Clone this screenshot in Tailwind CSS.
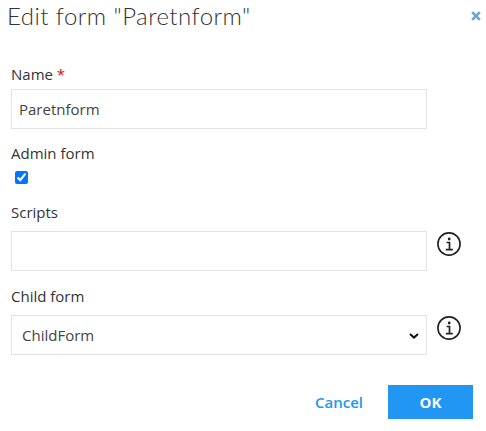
<!DOCTYPE html>
<html lang="en">
<head>
  <meta charset="UTF-8">
  <title>Edit form</title>
  <script src="https://cdn.jsdelivr.net/npm/@tailwindcss/browser@4"></script>
</head>
<body class="bg-white h-[431px] w-[486px] overflow-hidden font-['Open_Sans',sans-serif] text-[#333]">
  <header class="flex justify-between items-start h-[62px] pl-[7px] pr-[5px]">
    <h1 class="font-['Lato',sans-serif] font-light text-[24px] leading-[32px] text-[#333] tracking-[0.45px]">Edit form "Paretnform"</h1>
    <button class="mt-[11px] text-[#6aa5d8]">
      <svg width="10" height="10" viewBox="0 0 10 10"><path d="M1.2 1.2L8.8 8.8M8.8 1.2L1.2 8.8" stroke="currentColor" stroke-width="2.6" fill="none"/></svg>
    </button>
  </header>

  <form class="pl-[11px] pr-[25px]">
    <label class="block text-[15px] leading-[27px] h-[27px] -mt-[1px]">Name <span class="text-red-600">*</span></label>
    <input type="text" value="Paretnform" class="block w-[416px] h-[40px] mt-[1px] border border-[#e3e3e3] px-[7px] text-[15px] text-[#444]">

    <label class="block text-[15px] leading-[20px] mt-[14px]">Admin form</label>
    <input type="checkbox" checked class="block w-[13px] h-[13px] ml-[4px] mt-[8px] accent-[#0075ff]">

    <label class="block text-[15px] leading-[20px] mt-[18px]">Scripts</label>
    <div class="flex items-start gap-[10px] mt-[9px]">
      <input type="text" class="block shrink-0 w-[416px] h-[40px] border border-[#e3e3e3] px-[7px] text-[15px]">
      <svg width="24" height="24" viewBox="0 0 24 24" fill="none" stroke="#222" class="mt-[1px]">
        <circle cx="12" cy="12" r="11.1" stroke-width="1.6"/>
        <path d="M9.6 10.5h2.9v7M8.8 17.6h7" stroke-width="1.7"/>
        <circle cx="12.2" cy="7" r="1.4" fill="#222" stroke="none"/>
      </svg>
    </div>

    <label class="block text-[15px] leading-[20px] mt-[15px]">Child form</label>
    <div class="flex items-start gap-[10px] mt-[9px]">
      <div class="relative shrink-0 w-[416px] h-[40px]">
        <select class="block appearance-none w-full h-full border border-[#e3e3e3] pl-[10px] text-[15px] text-[#444] bg-white">
          <option>ChildForm</option>
        </select>
        <svg width="10" height="6" viewBox="0 0 10 6" fill="none" stroke="#111" stroke-width="2" class="absolute right-[8px] top-[18px]"><path d="M1 1l4 3.6L9 1"/></svg>
      </div>
      <svg width="24" height="24" viewBox="0 0 24 24" fill="none" stroke="#222" class="mt-[1px]">
        <circle cx="12" cy="12" r="11.1" stroke-width="1.6"/>
        <path d="M9.6 10.5h2.9v7M8.8 17.6h7" stroke-width="1.7"/>
        <circle cx="12.2" cy="7" r="1.4" fill="#222" stroke="none"/>
      </svg>
    </div>

    <div class="flex justify-end items-center gap-[25px] mt-[30px] -mr-[12px]">
      <button type="button" class="text-[15px] font-semibold text-[#2196f3]">Cancel</button>
      <button type="button" class="w-[85px] h-[34px] bg-[#2196f3] text-white text-[15px] font-bold">OK</button>
    </div>
  </form>
</body>
</html>
